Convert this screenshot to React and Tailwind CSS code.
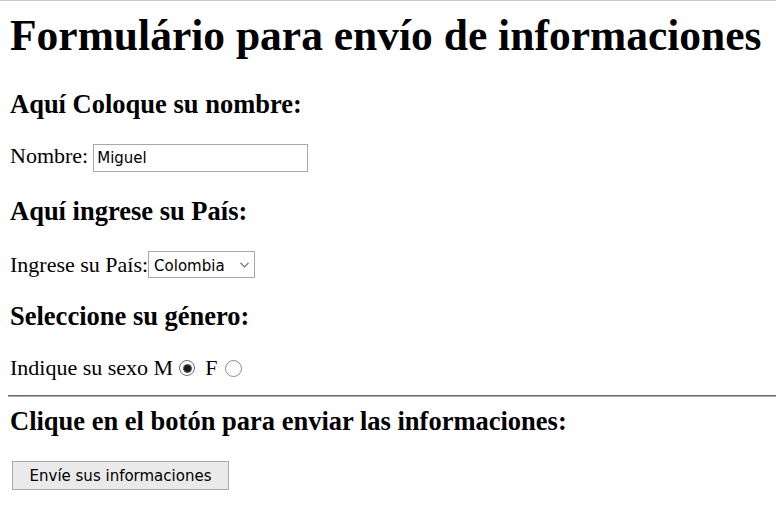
import React, { useState } from "react";

const App = () => {
  const [nombre, setNombre] = useState("Miguel");
  const [pais, setPais] = useState("Colombia");
  const [sexo, setSexo] = useState("M");

  return (
    <div className="min-h-[515px] bg-white border-t border-[#c8c8c8] text-black font-['Liberation_Serif','Times_New_Roman',serif]">
      <form className="flex flex-col pl-2" onSubmit={(e) => e.preventDefault()}>
        <h1 className="mt-[9px] text-[43.5px] leading-[50px] font-bold whitespace-nowrap pl-[2px]">
          Formulário para envío de informaciones
        </h1>

        <h3 className="mt-[29px] text-[26.5px] leading-[30px] font-bold pl-[2px]">
          Aquí Coloque su nombre:
        </h3>

        <div className="mt-[20px] flex items-baseline text-[22px] pl-[2px]">
          <span>Nombre:</span>
          <input
            type="text"
            value={nombre}
            onChange={(e) => setNombre(e.target.value)}
            className="ml-[5px] w-[215px] h-[28px] px-[3px] pt-[1px] border border-[#a9a9a9] bg-white text-[15px] font-['DejaVu_Sans',Verdana,sans-serif] outline-none"
          />
        </div>

        <h3 className="mt-[24px] text-[26.5px] leading-[30px] font-bold pl-[2px]">
          Aquí ingrese su País:
        </h3>

        <div className="mt-[22px] flex items-center text-[22px] pl-[2px]">
          <span>Ingrese su País:</span>
          <div className="relative flex items-center">
            <select
              value={pais}
              onChange={(e) => setPais(e.target.value)}
              className="appearance-none w-[107px] h-[27px] pt-[3px] pb-0 pl-[5px] pr-[20px] leading-[22px] border border-[#a9a9a9] bg-white text-[15px] font-['DejaVu_Sans',Verdana,sans-serif] outline-none"
            >
              <option>Colombia</option>
              <option>Brasil</option>
              <option>Argentina</option>
              <option>México</option>
            </select>
            <svg
              className="absolute right-[6px] top-1/2 -translate-y-1/2 pointer-events-none"
              width="9"
              height="6"
              viewBox="0 0 9 6"
            >
              <path d="M0.5 0.8 L4.5 4.8 L8.5 0.8" fill="none" stroke="#6b6b6b" strokeWidth="1.2" />
            </svg>
          </div>
        </div>

        <h3 className="mt-[20px] text-[26.5px] leading-[30px] font-bold pl-[2px]">
          Seleccione su género:
        </h3>

        <div className="mt-[24px] flex items-center h-[26px] text-[22px] leading-[26px] pl-[2px]">
          <span>Indique su sexo M</span>
          <button
            type="button"
            onClick={() => setSexo("M")}
            className="ml-[6px] w-[16px] h-[16px] rounded-full border border-[#707070] bg-white flex items-center justify-center"
          >
            {sexo === "M" && <span className="w-[9px] h-[9px] rounded-full bg-[#1a1a1a] border border-[#555]"></span>}
          </button>
          <span className="ml-[10px]">F</span>
          <button
            type="button"
            onClick={() => setSexo("F")}
            className="ml-[8px] w-[17px] h-[17px] rounded-full border border-[#8a8a8a] bg-white flex items-center justify-center"
          >
            {sexo === "F" && <span className="w-[9px] h-[9px] rounded-full bg-[#1a1a1a] border border-[#555]"></span>}
          </button>
        </div>

        <hr className="mt-[14px] h-[2px] border-0 border-t border-b border-t-[#6e6e6e] border-b-[#a8a8a8] -mr-2" />

        <h3 className="mt-[9px] text-[26.5px] leading-[30px] font-bold pl-[2px]">
          Clique en el botón para enviar las informaciones:
        </h3>

        <div className="mt-[25px] pl-[4px]">
          <button
            type="submit"
            className="w-[217px] h-[29px] pt-[2px] border border-[#a9a9a9] bg-[#eaeaea] text-[15px] font-['DejaVu_Sans',Verdana,sans-serif] text-black"
          >
            Envíe sus informaciones
          </button>
        </div>
      </form>
    </div>
  );
};

export default App;
